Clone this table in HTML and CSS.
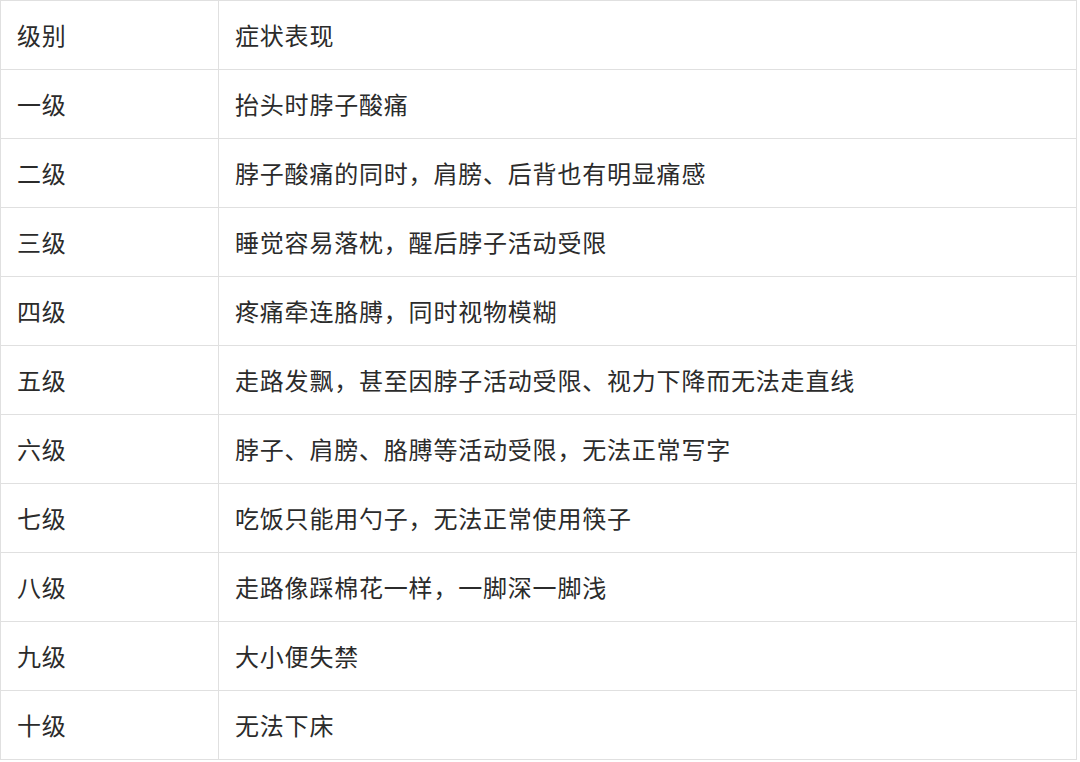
FILE: index.html
```html
<!DOCTYPE html>
<html lang="zh-CN">
<head>
<meta charset="utf-8">
<title>颈椎病级别</title>
<link rel="stylesheet" href="styles.css">
</head>
<body>
<table class="grade-table">
  <tbody>
    <tr><td class="col-level">级别</td><td class="col-desc">症状表现</td></tr>
    <tr><td class="col-level">一级</td><td class="col-desc">抬头时脖子酸痛</td></tr>
    <tr><td class="col-level">二级</td><td class="col-desc">脖子酸痛的同时，肩膀、后背也有明显痛感</td></tr>
    <tr><td class="col-level">三级</td><td class="col-desc">睡觉容易落枕，醒后脖子活动受限</td></tr>
    <tr><td class="col-level">四级</td><td class="col-desc">疼痛牵连胳膊，同时视物模糊</td></tr>
    <tr><td class="col-level">五级</td><td class="col-desc">走路发飘，甚至因脖子活动受限、视力下降而无法走直线</td></tr>
    <tr><td class="col-level">六级</td><td class="col-desc">脖子、肩膀、胳膊等活动受限，无法正常写字</td></tr>
    <tr><td class="col-level">七级</td><td class="col-desc">吃饭只能用勺子，无法正常使用筷子</td></tr>
    <tr><td class="col-level">八级</td><td class="col-desc">走路像踩棉花一样，一脚深一脚浅</td></tr>
    <tr><td class="col-level">九级</td><td class="col-desc">大小便失禁</td></tr>
    <tr><td class="col-level">十级</td><td class="col-desc">无法下床</td></tr>
  </tbody>
</table>
</body>
</html>
```
FILE: styles.css
```css
html, body {
  margin: 0;
  padding: 0;
  background: #ffffff;
}
body {
  font-family: "Noto Sans CJK SC", "Noto Sans", sans-serif;
  color: #2b2b2b;
}
.grade-table {
  border-collapse: collapse;
  width: 1077px;
  table-layout: fixed;
}
.grade-table td {
  border: 1px solid #e0e0e0;
  height: 68px;
  padding: 0 16px;
  font-size: 24px;
  letter-spacing: 0.8px;
  line-height: 30px;
  vertical-align: middle;
  white-space: nowrap;
}
.col-level {
  width: 218px;
  box-sizing: border-box;
}
```
